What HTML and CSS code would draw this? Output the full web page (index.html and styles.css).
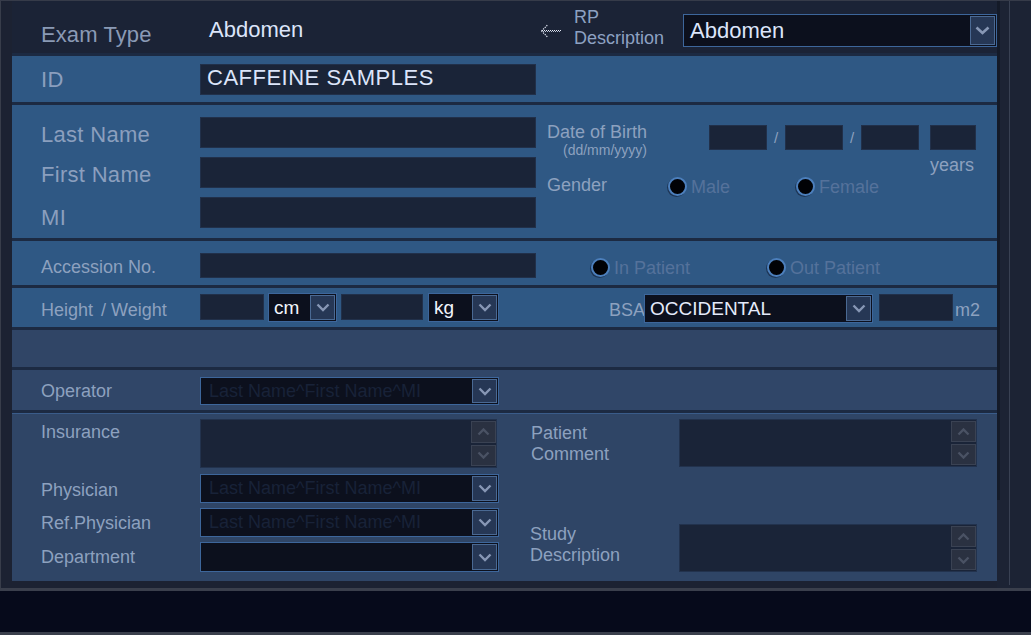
FILE: index.html
```html
<!DOCTYPE html>
<html lang="en">
<head>
<meta charset="utf-8">
<title>Patient Information</title>
<link rel="stylesheet" href="styles.css">
</head>
<body>
<div class="screen">
  <div class="workspace">
    <div class="gutter"></div>
    <div class="panel">

      <div class="row header">
        <div class="lbl-xl exam-label">Exam Type</div>
        <div class="exam-value">Abdomen</div>
        <div class="link-arrow">
          <svg width="22" height="16" viewBox="0 0 22 16">
            <path d="M2 7.5 H21" stroke="#e2e8f4" stroke-width="1" stroke-dasharray="1 1" fill="none"/>
            <path d="M3 8.5 H21" stroke="#b8c0d2" stroke-width="1" stroke-dasharray="1 1" fill="none"/>
            <path d="M1.5 8 L7.5 2 M1.5 8 L7.5 14" stroke="#e2e8f4" stroke-width="1.2" stroke-dasharray="1.3 1" fill="none"/>
          </svg>
        </div>
        <div class="rp-label">RP<br>Description</div>
        <div class="combo combo-rp">
          <span class="combo-text">Abdomen</span>
          <span class="combo-btn"><svg width="15" height="9" viewBox="0 0 15 9"><polyline points="1.5,1.5 7.5,7 13.5,1.5" fill="none" stroke="#8797b5" stroke-width="2.6"/></svg></span>
        </div>
      </div>

      <div class="row id-row">
        <div class="lbl-xl id-label">ID</div>
        <div class="field field-id">CAFFEINE SAMPLES</div>
      </div>

      <div class="row names">
        <div class="name-col">
          <div class="name-line">
            <div class="lbl-xl name-label">Last Name</div>
            <div class="field field-name"></div>
          </div>
          <div class="name-line">
            <div class="lbl-xl name-label">First Name</div>
            <div class="field field-name"></div>
          </div>
          <div class="name-line">
            <div class="lbl-xl name-label name-label-mi">MI</div>
            <div class="field field-name"></div>
          </div>
        </div>
        <div class="demo-col">
          <div class="dob">
            <div class="dob-label">Date of Birth<div class="dob-hint">(dd/mm/yyyy)</div></div>
            <div class="dob-fields">
              <div class="field dob-box"></div>
              <div class="dob-sep">/</div>
              <div class="field dob-box"></div>
              <div class="dob-sep">/</div>
              <div class="field dob-box"></div>
              <div class="age-col">
                <div class="field age-box"></div>
                <div class="lbl years">years</div>
              </div>
            </div>
          </div>
          <div class="gender">
            <div class="lbl gender-label">Gender</div>
            <div class="radio-item radio-male"><span class="radio"></span><span class="radio-text">Male</span></div>
            <div class="radio-item"><span class="radio"></span><span class="radio-text">Female</span></div>
          </div>
        </div>
      </div>

      <div class="row acc-row">
        <div class="lbl acc-label">Accession No.</div>
        <div class="field field-acc"></div>
        <div class="acc-radios">
          <div class="radio-item radio-in"><span class="radio"></span><span class="radio-text">In Patient</span></div>
          <div class="radio-item"><span class="radio"></span><span class="radio-text">Out Patient</span></div>
        </div>
      </div>

      <div class="row hw-row">
        <div class="lbl hw-label">Height <span class="hw-gap"></span>/ Weight</div>
        <div class="field field-h"></div>
        <div class="combo combo-cm">
          <span class="combo-text unit-text">cm</span>
          <span class="combo-btn"><svg width="14" height="9" viewBox="0 0 14 9"><polyline points="1.5,1.5 7,7 12.5,1.5" fill="none" stroke="#8797b5" stroke-width="2.4"/></svg></span>
        </div>
        <div class="field field-w"></div>
        <div class="combo combo-kg">
          <span class="combo-text unit-text">kg</span>
          <span class="combo-btn"><svg width="14" height="9" viewBox="0 0 14 9"><polyline points="1.5,1.5 7,7 12.5,1.5" fill="none" stroke="#8797b5" stroke-width="2.4"/></svg></span>
        </div>
        <div class="lbl bsa-label">BSA</div>
        <div class="combo combo-bsa">
          <span class="combo-text bsa-text">OCCIDENTAL</span>
          <span class="combo-btn"><svg width="14" height="9" viewBox="0 0 14 9"><polyline points="1.5,1.5 7,7 12.5,1.5" fill="none" stroke="#8797b5" stroke-width="2.4"/></svg></span>
        </div>
        <div class="field field-m2"></div>
        <div class="lbl m2-label">m2</div>
      </div>

      <div class="row empty-row"></div>

      <div class="row op-row">
        <div class="lbl op-label">Operator</div>
        <div class="combo combo-name">
          <span class="combo-text placeholder">Last Name^First Name^MI</span>
          <span class="combo-btn"><svg width="14" height="9" viewBox="0 0 14 9"><polyline points="1.5,1.5 7,7 12.5,1.5" fill="none" stroke="#8797b5" stroke-width="2.4"/></svg></span>
        </div>
      </div>

      <div class="row bottom">
        <div class="left-col">
          <div class="line">
            <div class="lbl side-label ins-label">Insurance</div>
            <div class="memo memo-ins">
              <div class="spin">
                <span class="spin-btn"><svg width="13" height="8" viewBox="0 0 13 8"><polyline points="1.5,6.5 6.5,1.5 11.5,6.5" fill="none" stroke="#4a5264" stroke-width="2.4"/></svg></span>
                <span class="spin-btn"><svg width="13" height="8" viewBox="0 0 13 8"><polyline points="1.5,1.5 6.5,6.5 11.5,1.5" fill="none" stroke="#4a5264" stroke-width="2.4"/></svg></span>
              </div>
            </div>
          </div>
          <div class="line sel-line sel-first">
            <div class="lbl side-label phys-label">Physician</div>
            <div class="combo combo-name combo-tall">
              <span class="combo-text placeholder">Last Name^First Name^MI</span>
              <span class="combo-btn"><svg width="14" height="9" viewBox="0 0 14 9"><polyline points="1.5,1.5 7,7 12.5,1.5" fill="none" stroke="#8797b5" stroke-width="2.4"/></svg></span>
            </div>
          </div>
          <div class="line sel-line">
            <div class="lbl side-label">Ref.Physician</div>
            <div class="combo combo-name combo-tall">
              <span class="combo-text placeholder">Last Name^First Name^MI</span>
              <span class="combo-btn"><svg width="14" height="9" viewBox="0 0 14 9"><polyline points="1.5,1.5 7,7 12.5,1.5" fill="none" stroke="#8797b5" stroke-width="2.4"/></svg></span>
            </div>
          </div>
          <div class="line sel-line">
            <div class="lbl side-label">Department</div>
            <div class="combo combo-name combo-dept">
              <span class="combo-text placeholder"></span>
              <span class="combo-btn"><svg width="14" height="9" viewBox="0 0 14 9"><polyline points="1.5,1.5 7,7 12.5,1.5" fill="none" stroke="#8797b5" stroke-width="2.4"/></svg></span>
            </div>
          </div>
        </div>
        <div class="right-col">
          <div class="line">
            <div class="lbl memo-label memo-label-pc">Patient<br>Comment</div>
            <div class="memo memo-right">
              <div class="spin">
                <span class="spin-btn"><svg width="13" height="8" viewBox="0 0 13 8"><polyline points="1.5,6.5 6.5,1.5 11.5,6.5" fill="none" stroke="#4a5264" stroke-width="2.4"/></svg></span>
                <span class="spin-btn"><svg width="13" height="8" viewBox="0 0 13 8"><polyline points="1.5,1.5 6.5,6.5 11.5,1.5" fill="none" stroke="#4a5264" stroke-width="2.4"/></svg></span>
              </div>
            </div>
          </div>
          <div class="line study-line">
            <div class="lbl memo-label">Study<br>Description</div>
            <div class="memo memo-right">
              <div class="spin">
                <span class="spin-btn"><svg width="13" height="8" viewBox="0 0 13 8"><polyline points="1.5,6.5 6.5,1.5 11.5,6.5" fill="none" stroke="#4a5264" stroke-width="2.4"/></svg></span>
                <span class="spin-btn"><svg width="13" height="8" viewBox="0 0 13 8"><polyline points="1.5,1.5 6.5,6.5 11.5,1.5" fill="none" stroke="#4a5264" stroke-width="2.4"/></svg></span>
              </div>
            </div>
          </div>
        </div>
      </div>

    </div>
    <div class="rail">
      <div class="rail-shadow"></div>
      <div class="rail-line"></div>
    </div>
  </div>
  <div class="divider"></div>
  <div class="statusbar"></div>
  <div class="bottom-edge"></div>
</div>
</body>
</html>
```

FILE: styles.css
```css
html, body {
  margin: 0;
  padding: 0;
}

body {
  width: 1031px;
  height: 635px;
  overflow: hidden;
  background: #1c2232;
  font-family: "Liberation Sans", Arial, sans-serif;
  color: #8da0bf;
}

.screen {
  display: flex;
  flex-direction: column;
  height: 635px;
}

.workspace {
  display: flex;
  height: 588px;
  box-sizing: border-box;
  border-top: 1px solid #363b49;
  border-left: 1px solid #383d4a;
  background: #1c2232;
}

.gutter {
  width: 11px;
  flex: none;
}

.panel {
  width: 985px;
  height: 580px;
  flex: none;
  display: flex;
  flex-direction: column;
  gap: 3px;
  background: #1c2a42;
}

.rail {
  flex: 1;
  display: flex;
  align-items: flex-start;
  background: #1c2334;
}

.rail-shadow {
  width: 3px;
  height: 499px;
  background: #141a28;
}

.rail-line {
  width: 1px;
  height: 584px;
  margin-left: 9px;
  background: #394153;
}

.divider {
  height: 3px;
  background: #3a3f4c;
}

.statusbar {
  height: 41px;
  background: #060a1b;
}

.bottom-edge {
  height: 3px;
  background: #3a3f4c;
}

/* rows */
.row {
  display: flex;
  align-items: flex-start;
  padding-left: 29px;
  box-sizing: border-box;
  flex: none;
}

.header {
  height: 52px;
  background: #1b2336;
}

.id-row {
  height: 46px;
  background: #2f5884;
}

.names {
  height: 133px;
  background: #2f5884;
}

.acc-row {
  height: 44px;
  background: #2f5884;
}

.hw-row {
  height: 39px;
  background: #2f5884;
}

.empty-row {
  height: 37px;
  background: #304566;
}

.op-row {
  height: 40px;
  background: #304668;
}

.bottom {
  height: 168px;
  background: #2f4566;
  box-shadow: inset 0 1px 0 #3a5c8a;
  padding-top: 6px;
}

/* text */
.lbl-xl {
  font-size: 22px;
  line-height: 25px;
  letter-spacing: 0.3px;
  color: #8b9fbe;
}

.lbl {
  font-size: 18px;
  line-height: 20px;
  color: #8da1bf;
  white-space: nowrap;
}

/* header */
.exam-label {
  width: 168px;
  margin-top: 21px;
  letter-spacing: 0.1px;
  color: #8a9ab5;
}

.exam-value {
  width: 331px;
  margin-top: 16px;
  font-size: 22px;
  line-height: 25px;
  color: #dce5fa;
}

.link-arrow {
  width: 34px;
  margin-top: 22px;
  height: 16px;
}

.link-arrow svg {
  display: block;
}

.rp-label {
  width: 109px;
  margin-top: 6px;
  font-size: 18px;
  line-height: 21px;
  color: #8da1c2;
}

/* combos */
.combo {
  display: flex;
  box-sizing: border-box;
  border: 1px solid #3d669b;
  background: #0c101d;
}

.combo-text {
  flex: 1;
  padding-left: 5px;
  overflow: hidden;
  white-space: nowrap;
}

.combo-btn {
  width: 25px;
  flex: none;
  margin: 1px;
  box-sizing: border-box;
  border: 1px solid #4a6993;
  background: #263755;
  display: flex;
  align-items: center;
  justify-content: center;
}

.combo-btn svg {
  display: block;
}

.combo-rp {
  width: 314px;
  height: 33px;
  margin-top: 13px;
}

.combo-rp .combo-text {
  font-size: 22px;
  line-height: 25px;
  padding-top: 3px;
  padding-left: 6px;
  color: #dce5fa;
}

/* fields */
.field {
  box-sizing: border-box;
  background: #1a2438;
  border: 1px solid #21304a;
}

.id-label {
  width: 159px;
  margin-top: 11px;
}

.field-id {
  width: 336px;
  height: 31px;
  margin-top: 8px;
  padding-left: 6px;
  font-size: 22px;
  line-height: 25px;
  letter-spacing: 0.5px;
  color: #dce5fa;
}

/* names */
.name-col {
  width: 495px;
  padding-top: 12px;
  display: flex;
  flex-direction: column;
  gap: 9px;
}

.name-line {
  display: flex;
  align-items: flex-start;
}

.name-label {
  width: 159px;
  margin-top: 5px;
  white-space: nowrap;
}

.name-label-mi {
  margin-top: 8px;
}

.field-name {
  width: 336px;
  height: 31px;
}

.demo-col {
  margin-left: 11px;
  display: flex;
  flex-direction: column;
}

.dob {
  margin-top: 17px;
  display: flex;
  align-items: flex-start;
}

.dob-label {
  width: 162px;
  font-size: 18px;
  line-height: 20px;
  color: #8da1bf;
}

.dob-hint {
  font-size: 14px;
  line-height: 16px;
  padding-left: 16px;
}

.dob-fields {
  display: flex;
  align-items: flex-start;
  margin-top: 3px;
}

.dob-box {
  width: 58px;
  height: 25px;
}

.dob-sep {
  width: 18px;
  text-align: center;
  font-size: 15px;
  line-height: 26px;
  color: #8da1bf;
}

.age-col {
  margin-left: 11px;
  display: flex;
  flex-direction: column;
}

.age-box {
  width: 46px;
  height: 25px;
}

.years {
  margin-top: 5px;
}

.gender {
  margin-top: 0;
  display: flex;
  align-items: flex-start;
}

.gender-label {
  width: 121px;
}

.radio-item {
  display: flex;
  align-items: flex-start;
  margin-top: 2px;
}

.radio-male {
  width: 128px;
}

.radio {
  width: 19px;
  height: 19px;
  flex: none;
  box-sizing: border-box;
  border-radius: 50%;
  background: #010206;
  border: 2px solid #4c7fbc;
  box-shadow: -1px 1px 0 #1e3656;
}

.radio-text {
  margin-left: 4px;
  font-size: 18px;
  line-height: 20px;
  color: #55729b;
  white-space: nowrap;
}

/* accession */
.acc-label {
  width: 159px;
  margin-top: 16px;
}

.field-acc {
  width: 336px;
  height: 25px;
  margin-top: 12px;
}

.acc-radios {
  display: flex;
  margin-left: 55px;
  margin-top: 15px;
}

.radio-in {
  width: 176px;
}

/* height / weight */
.hw-label {
  width: 159px;
  margin-top: 12px;
}

.hw-gap {
  display: inline-block;
  width: 3px;
}

.field-h {
  width: 64px;
  height: 26px;
  margin-top: 6px;
}

.combo-cm {
  width: 69px;
  height: 29px;
  margin-top: 5px;
  margin-left: 4px;
}

.field-w {
  width: 82px;
  height: 26px;
  margin-top: 6px;
  margin-left: 4px;
}

.combo-kg {
  width: 71px;
  height: 29px;
  margin-top: 5px;
  margin-left: 5px;
}

.unit-text,
.bsa-text {
  font-size: 19px;
  line-height: 25px;
  padding-top: 1px;
  color: #f2f5fc;
}

.bsa-text {
  color: #e4eafa;
}

.bsa-label {
  width: 35px;
  margin-left: 110px;
  margin-top: 12px;
}

.combo-bsa {
  width: 229px;
  height: 29px;
  margin-top: 6px;
}

.field-m2 {
  width: 74px;
  height: 27px;
  margin-top: 6px;
  margin-left: 6px;
}

.m2-label {
  margin-left: 2px;
  margin-top: 12px;
}

/* operator */
.op-label {
  width: 159px;
  margin-top: 11px;
}

.combo-name {
  width: 299px;
  height: 28px;
  margin-top: 7px;
}

.placeholder {
  padding-left: 8px;
  font-size: 18px;
  line-height: 26px;
  color: #182238;
}

/* bottom */
.left-col {
  width: 489px;
  display: flex;
  flex-direction: column;
}

.line {
  display: flex;
  align-items: flex-start;
}

.side-label {
  width: 159px;
  margin-top: 5px;
}

.ins-label {
  margin-top: 3px;
}

.phys-label {
  margin-top: 6px;
}

.sel-line {
  margin-top: 5px;
}

.sel-first {
  margin-top: 6px;
}

.combo-tall {
  height: 29px;
  margin-top: 0;
}

.combo-dept {
  height: 30px;
  margin-top: 0;
}

.memo {
  box-sizing: border-box;
  background: #1a2438;
  border: 1px solid #22324d;
  display: flex;
  justify-content: flex-end;
  padding: 1px 0;
}

.memo-ins {
  width: 297px;
  height: 49px;
}

.memo-right {
  width: 298px;
  height: 48px;
}

.spin {
  width: 25px;
  display: flex;
  flex-direction: column;
  gap: 2px;
}

.spin-btn {
  flex: 1;
  box-sizing: border-box;
  background: #2a3141;
  border: 1px solid #3a4253;
  display: flex;
  align-items: center;
  justify-content: center;
}

.spin-btn svg {
  display: block;
}

.right-col {
  display: flex;
  flex-direction: column;
}

.memo-label {
  width: 149px;
  font-size: 18px;
  line-height: 21px;
}

.memo-label-pc {
  margin-top: 4px;
  padding-left: 1px;
  width: 148px;
}

.study-line {
  margin-top: 57px;
}
```
